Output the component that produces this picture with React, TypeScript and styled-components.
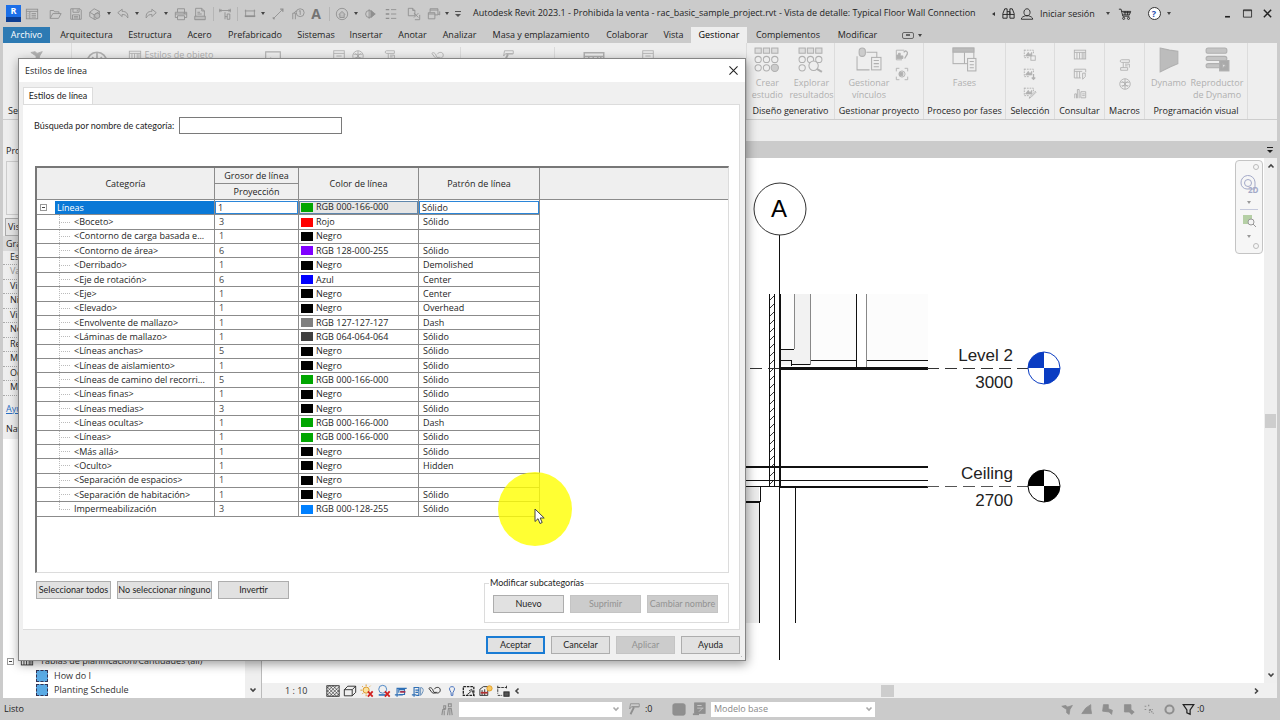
import React from "react";
import styled, { createGlobalStyle, css } from "styled-components";

const GlobalStyle = createGlobalStyle`
  *, *::before, *::after { box-sizing: border-box; }
  html, body { margin: 0; padding: 0; }
  body {
    font-family: "Open Sans", "Noto Sans", sans-serif;
    font-size: 9px;
    line-height: 12px;
    color: #1e1e1e;
    background: #cbcbcb;
  }
  button, input, select { font: inherit; color: inherit; margin: 0; }
`;

const controlFont = css`
  font-family: Lato, "Open Sans", sans-serif;
  font-size: 9px;
`;

/* ---------- icons ---------- */

const glyphs: Record<string, React.ReactNode> = {
  home: <><rect x="1.5" y="2.5" width="13" height="11" /><path d="M1.5 5h13M5.5 5v8.500M7.500 7.500h5M7.500 9.500h5M7.500 11.500h5M3 7.500h1M3 9.500h1M3 11.500h1" /></>,
  open: <path d="M2.500 13V4h4l1 1.500h5V8M2.500 13l3-5.500h9.500L12 13z" />,
  save: <><path d="M2 2h10.500L14 3.500V14H2zM4.500 2v4h7V2M4 14V9h8v5" /><path d="M5.500 11h5M5.500 12.500h5M9.500 3v2" /></>,
  sync: <><path d="M2 6l5-4 6 3v6l-5 3.500L2 11zM2 6l5 3 6-4M7 9v5" /><circle cx="10.500" cy="10" r="3" fill="#bbb" /></>,
  undo: <path d="M2 6.500L7 2.500V5c5 0 7 2.500 6.500 7.500C12 9.500 10 8.500 7 8.500V11z" />,
  redo: <path d="M14 6.500L9 2.500V5c-5 0-7 2.500-6.500 7.500C4 9.500 6 8.500 9 8.500V11z" />,
  print: <><path d="M4 6V2h8v4M4 12H1.500V6h13v6H12" /><path d="M4 10h8v4.500H4zM1.500 8h13" /><path d="M11 7h2" strokeWidth="1.500" /></>,
  pdf: <><path d="M3 1.500h7L13 4.500V14H3zM10 1.500v3h3" /><path d="M5 8h5M5 6h3M2 10.500h12v4H2z" fill="#bbb" /></>,
  measure: <path d="M2 2v4M14 2v4M2 4h12M4 3L2 4l2 1M12 3l2 1-2 1M8 6v8M10.500 8h3v6h-3zM8 11h2.500" />,
  dim: <><path d="M2 4.500h12M3 3v8M13 3v8" /><path d="M2 10.500h12" strokeWidth="2" /></>,
  line: <><path d="M3 13L12.500 3.500" /><path d="M10.500 2.500h3v3M2 12l2 2" strokeWidth="1.500" /></>,
  tag: <><path d="M2 14V7h3v7M3.500 7L6 4" /><circle cx="10.500" cy="6.500" r="4.500" /><path d="M10.500 4v5M9 5l1.500-1" /></>,
  cube: <><circle cx="8" cy="8" r="6.500" /><path d="M4.500 8.500L8 5l3.500 3.500M5.500 8v4h5V8" fill="#bbb" /></>,
  section: <><circle cx="7" cy="8" r="4" /><path d="M7 2.500V13.500" /><path d="M9 4l5 4-5 4z" fill="currentColor" /></>,
  lines: <><path d="M2 3h4M2 8h4M2 13h4" strokeWidth="1.500" /><path d="M8 3h6M8 8h6M8 13h6" /></>,
  closeWin: <><path d="M1.500 1.500h5L9 4v6H1.500zM6.500 1.500V4H9" /><path d="M9 14.500h5.500V9M8 7l5 5M13 7l-5 5" /></>,
  switchWin: <path d="M3.500 6V2h9v7H9M3.500 3.500h9M1.500 6.500H9v7H1.500zM1.500 8H9M14.500 5v4l-2-1" />,
  binoculars: <path d="M2 13V8l2-5h2.500v10zM9.500 13V3H12l2 5v5zM6.500 6h3v3h-3M2 9h4.500M9.500 9H14" />,
  user: <path d="M8 10c-2.500 0-3.500-2-3.500-4S6 2 8 2s3.500 2 3.500 4-1 4-3.500 4zM1.500 14h13c0-2.500-2.500-3-4.500-4H6c-2 1-4.500 1.500-4.500 4z" />,
  cart: <><path d="M1 2.500h2.500l2 8h7.500M4 5h10.500l-1.500 4H5.500M6 6.500h8M8 5v4M11 5v4" /><circle cx="6.500" cy="13" r="1.200" /><circle cx="12" cy="13" r="1.200" /></>,
  min: <path d="M5 12h6" strokeWidth="2" />,
  max: <path d="M3 3.500h10v9H3zM3 4.500h10" />,
  close: <path d="M3.500 3.500l9 9M12.500 3.500l-9 9" strokeWidth="1.800" />,
  thinClose: <path d="M3 3l10 10M13 3L3 13" strokeWidth="1.300" />,
  page: <><rect x="2" y="2" width="12" height="12" /><path d="M2 5h12M5 8h6M5 11h6" /></>,
  picture: <><path d="M1.500 2.500h13v11h-13z" /><path d="M2 12l4-4 3 3 2-2 3 3z" fill="currentColor" /></>,
  linkPicture: <><path d="M8 13.500H1.500v-11h9" /><path d="M2 12V8h2V6h2v3h3v3z" fill="currentColor" /><path d="M10 5c2-3 5-1 4 2l-3 5" strokeWidth="1.500" /></>,
  target: <><path d="M1.500 5V1.500H5M11 1.500h3.500V5M1.500 11v3.500H5M14.500 11v3.500H11" /><circle cx="8" cy="8" r="3.500" /><path d="M5 6h4v4H5z" fill="currentColor" /></>,
  pictureBox: <><path d="M1.500 2v9M1.500 2.500H12V6M1.500 11H7" strokeDasharray="2 1" /><path d="M3 9l3-4 2 3 2-3v4z" fill="currentColor" /><rect x="9" y="9" width="5" height="5" /></>,
  picturePoint: <><path d="M1.500 2v9M1.500 2.500H12V6M1.500 11H7" strokeDasharray="2 1" /><path d="M3 9l3-4 2 3 2-3v4z" fill="currentColor" /><path d="M12 8v6M10 12l2 2 2-2" strokeWidth="1.500" /></>,
  pictureEdit: <><path d="M1.500 2v9M1.500 2.500H12V6M1.500 11H7" strokeDasharray="2 1" /><path d="M3 9l3-4 2 3 2-3v4z" fill="currentColor" /><path d="M7 14l1-2 6-6 1 1-6 6z" /></>,
  grid: <><rect x="1.500" y="2.500" width="13" height="10" /><path d="M1.500 5h13M4.500 5v7.500M7.500 5v7.500M10.500 5v7.500M12.500 5v7.500" /></>,
  gridFind: <><path d="M9 12.500H1.500v-10h13V6M1.500 5h9M4.500 5v7.500M7.500 5v7.500" /><path d="M11 7h3v4l-3 3z" /></>,
  chart: <path d="M2 14V9h2v5M5 14V4h2v10M9 6.500h5.500v7H9zM10.500 9h3M10.500 11h3" />,
  script: <path d="M4 2h9v3H6v6M4 2C2 2 2 5 4 5h2M3 11h8v3H3zM8 7h5v4M8 9h3" />,
  globe: <><circle cx="8" cy="8" r="6" /><path d="M3 6h10M4 10h8M8 2v12M5 5l6 6M11 5l-6 6" /></>,
  hatch: <><rect x="1" y="2" width="14" height="12" /><path d="M1 5l3-3M1 9l7-7M1 13l11-11M4 14L15 3M8 14l7-7M12 14l3-3M4 2l11 11M1 3l11 11M1 7l7 7M8 2l7 7M1 11l3 3" strokeWidth=".7" /></>,
  box: <path d="M1.500 6.500h9v7h-9zM1.500 6.500l4-4h9l-4 4M14.500 2.500v7l-4 4" />,
  sunOff: <><circle cx="7" cy="7" r="3.500" stroke="#d9901a" fill="#fbe3a0" /><path d="M7 .5v2M.5 7h2M2.500 2.500l1 1M11 3l1-1M2.500 11.500l1-1M7 12v2" stroke="#d9901a" /><path d="M9 8.500l5.500 6M14.500 8.500l-5.500 6" stroke="#d02020" strokeWidth="2" /></>,
  shadowOff: <><circle cx="6.500" cy="6" r="4.500" stroke="#3c7cc0" /><path d="M2 12.500h8" stroke="#3c7cc0" strokeWidth="2" /><path d="M9 8.500l5.500 6M14.500 8.500l-5.500 6" stroke="#d02020" strokeWidth="2" /></>,
  crop: <><path d="M1 12.500h9M3.500 14.500V5h11M5.500 10V6.500H12V12H6" stroke="#2f6fb5" strokeWidth="1.300" /><path d="M7 9h6" stroke="#a03050" strokeWidth="2" /></>,
  cropShow: <><path d="M1 12.500h5M3.500 14.500V4H9v9H6M5 7h4M5 9.500h3" stroke="#2f6fb5" strokeWidth="1.300" /><path d="M11 4c3 0 3.500 3 2.500 5s-1.500 3-2.500 4z" stroke="#5b87b5" /></>,
  glasses: <><path d="M1 5c2-2 4 0 5 3s3 3 4 1" /><path d="M7 6c2-3 7-3 7 1s-5 4-6 2" /><path d="M1 5l3 4c1 2 4 2 4 0" /></>,
  bulb: <path d="M8 3c2.500 0 3.500 2 2.500 4L9 10v3H7v-3L5.500 7C4.500 5 5.500 3 8 3z" stroke="#3363b8" />,
  film: <><rect x="1.500" y="3" width="12" height="10" strokeDasharray="3 1" strokeWidth="1.500" /><path d="M8 8l3-2 3 8M6 12l5-4" /></>,
  reveal: <><path d="M1 6l4-3h5v10H1zM3.500 7v6M6.500 6v7" /><path d="M2 10h8" stroke="#b03030" strokeWidth="2" /><circle cx="12" cy="5" r="3" stroke="#e09a20" fill="#f8c860" /></>,
  lockDim: <><path d="M2 2v9M2 4h10M12 2v4M2 13h5" strokeDasharray="3 1" /><rect x="9" y="9" width="6" height="5" fill="#555" /></>,
  people: <path d="M4 4h2v3H4zM9 2h3v3H9zM2 14l1-6h3M4.500 9v5M8 14l1-7h3l1 7M10.500 8v6" strokeWidth="1.200" />,
  roller: <><path d="M4 2h10v3.500H5L3 8zM5.500 5.500h8" /><path d="M8 6l-4 8" strokeWidth="2" /></>,
  solid: <rect x="1" y="2" width="14" height="13" rx="2" fill="currentColor" />,
  solidDoc: <><rect x="3" y="1" width="12" height="12" fill="currentColor" /><path d="M1 14h7" strokeWidth="2" /><path d="M6 4h5M6 7h7M8 11l4-4" stroke="#ccc" /></>,
  selA: <path d="M1 4l5-1 2 2 6-2-3 5-1 6-3-2V8z" fill="currentColor" />,
  selB: <path d="M1 13l5-7 6-4v5l1 6z" fill="currentColor" />,
  selC: <path d="M3 2h6v5l5 2-1 5-3-3-8-1z" fill="currentColor" />,
  selD: <path d="M3 2h8v6l4 3-3 3-3-3H3z" fill="currentColor" />,
  selE: <path d="M2 4h3M7 2v3M2 8h3M8 8l5 5M8 8v4M8 8h4" strokeWidth="1.500" strokeDasharray="2 1" />,
  ring: <circle cx="8" cy="8" r="5" strokeWidth="2.500" />,
  funnel: <path d="M1.500 2h13L10 8.500V14l-4-2V8.500z" strokeWidth="1.500" />,
};

const Svg = styled.svg`
  display: block;
  flex: none;
  fill: none;
  stroke: currentColor;
`;

const Glyph = ({ name, size = 14 }: { name: string; size?: number }) => (
  <Svg width={size} height={size} viewBox="0 0 16 16" aria-hidden="true">{glyphs[name]}</Svg>
);

const studyCells = (
  <>
    {[1, 9, 17].map((x) => <rect key={x} x={x} y="1" width="6" height="5" fill="#ddd" />)}
    {[4, 12, 20].map((x) => <circle key={x} cx={x} cy="12" r="3" />)}
    <circle cx="4" cy="20" r="3" />
  </>
);

const bigGlyphs: Record<string, React.ReactNode> = {
  study: (
    <>
      {studyCells}
      <circle cx="12" cy="20" r="3" />
      <circle cx="20" cy="20" r="3.500" fill="#ccc" />
    </>
  ),
  results: (
    <>
      {studyCells}
      <circle cx="15" cy="18" r="4.500" fill="#eee" />
      <path d="M18 21l5 3" strokeWidth="2" />
    </>
  ),
  links: (
    <>
      <rect x="3" y="1" width="6" height="8" rx="3" fill="#ccc" />
      <path d="M10 5h10v5M1 9v13h12" />
      <rect x="15" y="10" width="9" height="12" fill="#eee" />
      <path d="M17 13h5M17 16h5M17 19h5" />
    </>
  ),
  phases: (
    <>
      <rect x="1" y="1" width="20" height="15" />
      <rect x="1" y="1" width="20" height="4" fill="#bbb" />
      <path d="M12 5v11" />
      <rect x="15" y="11" width="8" height="12" fill="#eee" />
      <path d="M17 14h4M17 17h4M17 20h4" />
    </>
  ),
  dynamo: <path d="M4 1l9 2 8 1v12l-7 3-10 5zM4 1v23" fill="#bcbcbc" />,
  player: (
    <>
      <rect x="2" y="1" width="20" height="5" rx="2" fill="#c4c4c4" />
      <rect x="2" y="9" width="20" height="4" rx="2" fill="#c4c4c4" />
      <rect x="2" y="16" width="14" height="4" rx="2" fill="#c4c4c4" />
      <rect x="15" y="13" width="9" height="10" fill="#aaa" />
      <path d="M18 16v4l3-2z" fill="#eee" />
    </>
  ),
};

const BigGlyph = ({ name }: { name: string }) => (
  <Svg width={26} height={26} viewBox="0 0 25 25" aria-hidden="true">{bigGlyphs[name]}</Svg>
);

const Caret = styled.span<{ $left?: boolean; $light?: boolean }>`
  width: 0;
  height: 0;
  border: 2px solid transparent;
  ${({ $left, $light }) =>
    $left
      ? css`border-right: 3px solid #333; border-left: 0;`
      : css`border-top: 3px solid ${$light ? "#999" : "#444"}; border-bottom: 0;`}
`;

/* ---------- window frame ---------- */

const Window = styled.div`
  position: relative;
  display: flex;
  flex-direction: column;
  min-height: 100vh;
  overflow: hidden;
`;

const TitleBar = styled.header`
  display: flex;
  align-items: center;
  height: 27px;
  padding: 0 3px 0 6px;
`;

const ToolCell = styled.button<{ $w: number; $dark?: boolean }>`
  display: flex;
  align-items: center;
  justify-content: center;
  flex: none;
  width: ${({ $w }) => $w}px;
  height: 20px;
  padding: 0;
  border: 0;
  background: none;
  color: ${({ $dark }) => ($dark ? "#222" : "#8f8f8f")};
`;

const Letter = styled.span`
  font: bold 14px/18px "Open Sans", sans-serif;
  color: #737373;
`;

const Logo = styled.span`
  display: flex;
  justify-content: center;
  flex: none;
  width: 15px;
  height: 17px;
  background: linear-gradient(#1c6fe8 70%, #0d3f94 70%);
  color: #fff;
  font-size: 9px;
  font-weight: 700;
`;

const Divider = styled.span<{ $w: number }>`
  flex: none;
  width: ${({ $w }) => $w}px;
  height: 14px;
  background: linear-gradient(#b5b5b5, #b5b5b5) center / 1px 100% no-repeat;
`;

const WindowTitle = styled.h1`
  flex: 1;
  margin: 0;
  padding: 0 0 2px 8px;
  font-size: 9px;
  font-weight: 400;
  white-space: nowrap;
  overflow: hidden;
`;

const SignIn = styled.a`
  width: 66px;
  padding-left: 3px;
  color: inherit;
  text-decoration: none;
  white-space: nowrap;
`;

const Spacer = styled.span<{ $w: number }>`
  flex: none;
  width: ${({ $w }) => $w}px;
`;

const HelpBadge = styled.span`
  width: 13px;
  height: 13px;
  border: 1px solid #333;
  border-radius: 50%;
  background: #fff;
  color: #1f4fb0;
  font: bold 9px/11px "Open Sans", sans-serif;
`;

const TabStrip = styled.nav`
  display: flex;
  height: 16px;
  padding-left: 3px;
`;

const RibbonTab = styled.button<{ $w: number; $kind?: "file" | "active" }>`
  flex: none;
  width: ${({ $w }) => $w}px;
  padding: 0;
  border: 0;
  background: none;
  line-height: 16px;
  text-align: center;
  white-space: nowrap;
  ${({ $kind }) => $kind === "file" && css`background: #2d7ab3; color: #fff; margin-right: 2px;`}
  ${({ $kind }) => $kind === "active" && css`background: #eee; color: #000;`}
`;

const RibbonToggle = styled.button`
  display: flex;
  align-items: center;
  gap: 4px;
  margin-left: 16px;
  padding: 0;
  border: 0;
  background: none;
`;

const Pill = styled.span`
  display: flex;
  align-items: center;
  justify-content: center;
  width: 12px;
  height: 7px;
  border: 1px solid #666;
  border-radius: 2px;
  &::after { content: ""; width: 4px; height: 2px; background: #666; }
`;

/* ---------- ribbon ---------- */

const Ribbon = styled.section`
  display: flex;
  height: 77px;
  margin: 0 3px;
  background: #eee;
  border-bottom: 1px solid #cdcdcd;
`;

const Panel = styled.section<{ $w: number }>`
  display: flex;
  flex-direction: column;
  flex: none;
  width: ${({ $w }) => $w}px;
  border-right: 1px solid #dcdcdc;
`;

const PanelBody = styled.div<{ $align?: string }>`
  display: flex;
  flex: 1;
  justify-content: ${({ $align }) => $align ?? "center"};
  gap: ${({ $align }) => ($align ? 0 : 2)}px;
  padding-top: 4px;
  color: #b0b0b0;
`;

const PanelTitle = styled.h2<{ $start?: boolean }>`
  margin: 0;
  height: 14px;
  padding-left: ${({ $start }) => ($start ? 5 : 0)}px;
  font-size: 9px;
  font-weight: 400;
  text-align: ${({ $start }) => ($start ? "left" : "center")};
  white-space: nowrap;
`;

const BigTool = styled.button`
  display: flex;
  flex-direction: column;
  align-items: center;
  align-self: flex-start;
  min-width: 40px;
  padding: 0;
  border: 0;
  background: none;
  color: inherit;
  white-space: pre-line;
  svg { margin-bottom: 4px; }
`;

const SmallTools = styled.div<{ $top?: number }>`
  display: flex;
  flex-direction: column;
  gap: 5px;
  padding-top: ${({ $top }) => $top ?? 1}px;
`;

const TopTool = styled.span<{ $w: number; $line?: boolean }>`
  display: flex;
  flex: none;
  justify-content: center;
  gap: 3px;
  width: ${({ $w }) => $w}px;
  height: 56px;
  padding-top: 2px;
  white-space: nowrap;
  border-right: 1px solid ${({ $line }) => ($line ? "#dadada" : "transparent")};
`;

const OptionsBar = styled.div`
  height: 21px;
  margin: 0 3px;
  background: #eee;
`;

/* ---------- workspace ---------- */

const Workspace = styled.main`
  display: flex;
  flex: 1;
  margin: 0 3px;
`;

const SidePane = styled.aside`
  display: flex;
  flex-direction: column;
  flex: none;
  width: 259px;
  background: #eee;
  border-right: 1px solid #bbb;
`;

const PaneTitle = styled.h2`
  margin: 0;
  padding: 4px 0 4px 3px;
  font-size: 9px;
  line-height: 12px;
  font-weight: 400;
`;

const TypeSelector = styled.div`
  height: 54px;
  margin: 0 3px 3px;
  border: 1px solid #ccc;
`;

const PaneSelect = styled.select`
  height: 18px;
  margin: 0 2px;
  padding-left: 2px;
  appearance: none;
  border: 1px solid #aaa;
  border-radius: 0;
  background: #e4e4e4;
`;

const PropertyGroup = styled.h3`
  margin: 0;
  padding: 2px 3px 1px;
  font-size: 9px;
  font-weight: 400;
  background: #d9d9d9;
`;

const PropertyList = styled.ul`
  margin: 0;
  padding: 0 0 6px;
  list-style: none;
`;

const PropertyItem = styled.li<{ $off?: boolean }>`
  padding: 0 0 0 7px;
  line-height: 12px;
  height: 14px;
  border-bottom: 1px dotted #aaa;
  white-space: nowrap;
  color: ${({ $off }) => ($off ? "#999" : "inherit")};
  &:nth-child(2n) { height: 15px; }
`;

const PaneLink = styled.a`
  display: block;
  padding: 1px 3px 4px;
  color: #2a6fc4;
`;

const Browser = styled.div`
  display: flex;
  flex: 1;
  background: #fff;
`;

const Tree = styled.ul`
  display: flex;
  flex: 1;
  flex-direction: column;
  justify-content: flex-end;
  margin: 0;
  padding: 0 0 1px 4px;
  list-style: none;
`;

const TreeItem = styled.li<{ $depth: number }>`
  display: flex;
  align-items: center;
  gap: 6px;
  height: 14px;
  padding-left: ${({ $depth }) => $depth * 29}px;
  color: #333;
  &:nth-child(2) { height: 15px; }
`;

const SheetIcon = styled.span`
  width: 12px;
  height: 12px;
  border: 1px dashed #335;
  background: #5aaae4;
`;

const Expander = styled.span`
  position: relative;
  flex: none;
  width: 7px;
  height: 7px;
  border: 1px solid #999;
  &::after { content: ""; position: absolute; left: 1px; right: 1px; top: 2px; height: 1px; background: #444; }
`;

const ScrollTrack = styled.div<{ $w: number }>`
  display: flex;
  flex-direction: column;
  align-items: center;
  justify-content: space-between;
  flex: none;
  width: ${({ $w }) => $w}px;
  padding: 4px 0;
  background: #efefef;
`;

const Chevron = ({ d, color = "#444" }: { d: string; color?: string }) => (
  <Svg width={8} height={8} viewBox="0 0 8 8" strokeWidth="1.600" color={color}><path d={d} /></Svg>
);
const UP = "M1.500 5.500L4 3l2.500 2.500";
const DOWN = "M1.500 2.500L4 5l2.500-2.500";
const RIGHT = "M3 1.500L5.500 4L3 6.500";
const LEFT = "M5.500 1.500L3 4l2.500 2.500";

const ViewPane = styled.section`
  display: flex;
  flex: 1;
  flex-direction: column;
  min-width: 0;
`;

const ViewTabs = styled.div`
  display: flex;
  align-items: center;
  justify-content: flex-end;
  height: 17px;
  padding-right: 4px;
`;

const ViewMenu = styled.span<{ $light?: boolean }>`
  width: 6px;
  padding-top: 2px;
  border-top: 1px solid ${({ $light }) => ($light ? "#555" : "#222")};
  &::after {
    content: "";
    display: block;
    border: 3px solid transparent;
    border-top-color: ${({ $light }) => ($light ? "#555" : "#222")};
    border-bottom: 0;
  }
`;

const ViewRow = styled.div`
  display: flex;
  flex: 1;
`;

const Canvas = styled.div`
  position: relative;
  flex: 1;
  min-width: 0;
  background: #fff;
`;

const Drawing = styled.svg`
  display: block;
  position: absolute;
  width: 100%;
  height: 100%;
  font-family: "Liberation Sans", Arial, sans-serif;
`;

const Thumb = styled.span<{ $w: number; $h: number }>`
  width: ${({ $w }) => $w}px;
  height: ${({ $h }) => $h}px;
  background: #cdcdcd;
`;

const NavBar = styled.div`
  position: absolute;
  top: 2px;
  right: 1px;
  display: flex;
  flex-direction: column;
  align-items: center;
  justify-content: space-between;
  width: 28px;
  height: 94px;
  padding: 3px 0 4px;
  border: 1px solid #c4c4c4;
  border-radius: 4px;
  background: #f6f6f6;
  color: #a3a9c8;
`;

const NavDot = styled.span`
  align-self: flex-end;
  width: 6px;
  height: 6px;
  margin-right: 3px;
  border: 1px solid #bbb;
  border-radius: 50%;
`;

const ViewControls = styled.div`
  display: flex;
  align-items: center;
  height: 15px;
  padding: 0 8px 0 23px;
  background: #f0f0f0;
  color: #333;
`;

const Scale = styled.span`
  width: 39px;
`;

const HScroll = styled.div`
  display: flex;
  flex: 1;
  align-items: center;
  justify-content: space-between;
`;

const StatusBar = styled.footer`
  display: flex;
  align-items: center;
  height: 22px;
  padding-left: 4px;
  background: #cbcbcb;
`;

const StatusText = styled.span<{ $w: number }>`
  flex: none;
  width: ${({ $w }) => $w}px;
`;

const StatusSelect = styled.div<{ $w: number }>`
  position: relative;
  display: flex;
  align-items: center;
  justify-content: flex-end;
  flex: none;
  width: ${({ $w }) => $w}px;
  height: 15px;
  padding-right: 2px;
  background: #fff;
  select {
    position: absolute;
    inset: 0;
    width: 100%;
    padding: 0 3px;
    appearance: none;
    border: 0;
    background: none;
    color: #888;
  }
`;

/* ---------- dialog ---------- */

const Dialog = styled.section`
  position: absolute;
  left: 18px;
  top: 58px;
  display: flex;
  flex-direction: column;
  width: min(728px, calc(100vw - 36px));
  border: 1px solid #858585;
  background: #f0f0f0;
  box-shadow: 1px 3px 10px rgba(0, 0, 0, 0.4);
`;

const DialogHeader = styled.header`
  display: flex;
  align-items: center;
  justify-content: space-between;
  height: 23px;
  padding: 0 4px 0 6px;
  background: #fff;
`;

const DialogTitle = styled.h2`
  margin: 0;
  font-size: 9px;
  font-weight: 400;
`;

const DialogTabs = styled.div`
  display: flex;
  padding: 5px 0 0 4px;
`;

const DialogTab = styled.button`
  ${controlFont}
  width: 70px;
  height: 17px;
  padding: 0;
  border: 1px solid #dcdcdc;
  border-bottom: 0;
  background: #fff;
  white-space: nowrap;
`;

const Page = styled.div`
  margin: 0 5px 0 4px;
  padding: 12px 10px 6px 11px;
  border: 1px solid #dcdcdc;
  border-left: 0;
  background: #fff;
`;

const Search = styled.label`
  ${controlFont}
  display: flex;
  align-items: center;
  gap: 5px;
  white-space: nowrap;
`;

const SearchInput = styled.input`
  width: 163px;
  height: 17px;
  border: 1px solid #7a7a7a;
`;

const GridFrame = styled.div`
  height: 407px;
  margin: 32px 0 8px 1px;
  border: 1px solid #dcdcdc;
  border-top: 2px solid #777;
  border-left: 2px solid #777;
`;

const Grid = styled.table`
  width: 100%;
  height: 349px;
  table-layout: fixed;
  border-collapse: separate;
  border-spacing: 0;
`;

const line = "1px solid #8b8b8b";

const HeadCell = styled.th`
  height: 16px;
  padding: 0;
  border-right: ${line};
  border-bottom: ${line};
  background: #efefef;
  font-weight: 400;
  &:last-child[rowspan] { border-right: 0; }
`;

const Cell = styled.td<{ $pad?: number }>`
  padding: 0 0 0 ${({ $pad }) => $pad ?? 4}px;
  border-right: ${line};
  border-bottom: ${line};
  line-height: 12px;
  white-space: nowrap;
  overflow: hidden;
`;

const NumberCell = styled(Cell)`
  color: #444;
`;

const TreeCell = styled(Cell)<{ $last?: boolean }>`
  padding-left: 37px;
  background-image:
    repeating-linear-gradient(#bbb 0 1px, transparent 1px 2px),
    repeating-linear-gradient(90deg, #bbb 0 1px, transparent 1px 2px);
  background-size: 1px ${({ $last }) => ($last ? "50%" : "100%")}, 12px 1px;
  background-position: 22px 0, 22px 50%;
  background-repeat: no-repeat;
`;

const RootRow = styled.div`
  display: flex;
  align-items: center;
  padding-left: 3px;
`;

const RootLabel = styled.span`
  flex: 1;
  margin-left: 8px;
  padding-left: 2px;
  line-height: 13px;
  background: #0a78d6;
  color: #fff;
`;

const FillerCell = styled.td`
  padding: 0;
`;

const editing = css`
  display: flex;
  align-items: center;
  width: 100%;
  height: 13px;
  padding: 0 2px;
  border: 1px solid #2b86d9;
  border-radius: 0;
  background: #fff;
  appearance: none;
  outline: 0;
`;
const EditInput = styled.input`${editing}`;
const EditSelect = styled.select`${editing}`;
const EditButton = styled.button`
  ${editing}
  padding: 0 1px;
  border: 1px solid #5f87ad;
  background: #e6e6e6;
`;

const ColorValue = styled.span`
  display: flex;
  align-items: center;
  gap: 3px;
`;

const Swatch = styled.span<{ $c: string }>`
  width: 12px;
  height: 9px;
  background: ${({ $c }) => $c};
`;

const PageFooter = styled.div`
  display: flex;
  align-items: flex-start;
  justify-content: space-between;
  padding-left: 2px;
`;

const Buttons = styled.div`
  display: flex;
  gap: 6px;
`;

const PushButton = styled.button<{ $w: number; $primary?: boolean }>`
  ${controlFont}
  width: ${({ $w }) => $w}px;
  height: 18px;
  padding: 0;
  border: 1px solid #adadad;
  background: #e1e1e1;
  line-height: 14px;
  white-space: nowrap;
  ${({ $primary }) => $primary && css`border: 2px solid #1a7cd4;`}
  &:disabled { border-color: #c4c4c4; background: #cccccc; color: #929292; }
`;

const GroupBox = styled.fieldset`
  ${controlFont}
  display: flex;
  gap: 6px;
  width: 245px;
  margin: -4px 0 0;
  padding: 6px 0 9px 8px;
  border: 1px solid #dcdcdc;
  legend { margin-left: -4px; padding: 0 1px; }
`;

const DialogFooter = styled.footer`
  display: flex;
  justify-content: flex-end;
  gap: 6px;
  padding: 6px 5px;
`;

const ResizeGrip = styled.span`
  position: absolute;
  right: 1px;
  bottom: 1px;
  width: 7px;
  height: 7px;
  background: radial-gradient(#bbb 40%, transparent 45%) 0 0 / 3px 3px;
  clip-path: polygon(100% 0, 100% 100%, 0 100%);
`;

const ClickHalo = styled.span`
  position: absolute;
  left: 479px;
  top: 413px;
  width: 74px;
  height: 74px;
  border-radius: 50%;
  background: rgba(255, 255, 0, 0.8);
  pointer-events: none;
  svg { position: absolute; left: 36px; top: 36px; }
`;

/* ---------- data ---------- */

type Row = [name: string, weight: number, swatch: string, color: string, pattern: string];
const rows: Row[] = [
  ["<Boceto>", 3, "#ff0000", "Rojo", "Sólido"],
  ["<Contorno de carga basada e...", 1, "#000000", "Negro", ""],
  ["<Contorno de área>", 6, "#8000ff", "RGB 128-000-255", "Sólido"],
  ["<Derribado>", 1, "#000000", "Negro", "Demolished"],
  ["<Eje de rotación>", 6, "#0000ff", "Azul", "Center"],
  ["<Eje>", 1, "#000000", "Negro", "Center"],
  ["<Elevado>", 1, "#000000", "Negro", "Overhead"],
  ["<Envolvente de mallazo>", 1, "#7f7f7f", "RGB 127-127-127", "Dash"],
  ["<Láminas de mallazo>", 1, "#404040", "RGB 064-064-064", "Sólido"],
  ["<Líneas anchas>", 5, "#000000", "Negro", "Sólido"],
  ["<Líneas de aislamiento>", 1, "#000000", "Negro", "Sólido"],
  ["<Líneas de camino del recorri...", 5, "#00a600", "RGB 000-166-000", "Sólido"],
  ["<Líneas finas>", 1, "#000000", "Negro", "Sólido"],
  ["<Líneas medias>", 3, "#000000", "Negro", "Sólido"],
  ["<Líneas ocultas>", 1, "#00a600", "RGB 000-166-000", "Dash"],
  ["<Líneas>", 1, "#00a600", "RGB 000-166-000", "Sólido"],
  ["<Más allá>", 1, "#000000", "Negro", "Sólido"],
  ["<Oculto>", 1, "#000000", "Negro", "Hidden"],
  ["<Separación de espacios>", 1, "#000000", "Negro", ""],
  ["<Separación de habitación>", 1, "#000000", "Negro", "Sólido"],
  ["Impermeabilización", 3, "#0080ff", "RGB 000-128-255", "Sólido"],
];

const tabs: [string, number, ("file" | "active")?][] = [
  ["Archivo", 47, "file"], ["Arquitectura", 69], ["Estructura", 58], ["Acero", 41], ["Prefabricado", 70],
  ["Sistemas", 52], ["Insertar", 48], ["Anotar", 45], ["Analizar", 49], ["Masa y emplazamiento", 114],
  ["Colaborar", 58], ["Vista", 35], ["Gestionar", 56, "active"], ["Complementos", 82], ["Modificar", 57],
];

const quickTools: [string, number][] = [
  ["home", 22], ["open", 24], ["save", 18], ["sync", 20], ["caret", 8], ["undo", 20], ["caret", 8], ["redo", 20],
  ["caret", 10], ["print", 20], ["pdf", 18], ["|", 8], ["measure", 16], ["|", 8], ["dim", 18], ["caret", 8],
  ["line", 22], ["tag", 18], ["A", 18], ["|", 8], ["cube", 18], ["caret", 10], ["section", 18], ["lines", 24],
  ["closeWin", 22], ["switchWin", 18], ["caret", 8], ["menu", 14],
];

const properties = [
  "Escala", "Valor", "Visualizar", "Nivel", "Vistas", "Nombre", "Recortar", "Modificar", "Ocultar", "Mostrar",
];

const viewTools = ["hatch", "box", "sunOff", "shadowOff", "crop", "cropShow", "glasses", "bulb", "film", "reveal", "lockDim"];
const filterTools: [string, number][] = [
  ["selA", 20], ["selB", 20], ["selC", 21], ["selD", 21], ["selE", 21], ["ring", 19],
];

/* ---------- parts ---------- */

const QuickTool = ({ name, w }: { name: string; w: number }) => {
  if (name === "|") return <Divider $w={w} />;
  if (name === "caret") return <ToolCell $w={w} aria-label="Más"><Caret /></ToolCell>;
  if (name === "menu") return <ToolCell $w={w} aria-label="Personalizar"><ViewMenu $light /></ToolCell>;
  if (name === "A") return <ToolCell $w={w}><Letter>A</Letter></ToolCell>;
  return <ToolCell $w={w} aria-label={name}><Glyph name={name} /></ToolCell>;
};

const LevelHead = ({ x, y, color }: { x: number; y: number; color: string }) => (
  <g transform={`translate(${x} ${y})`}>
    <circle r="16" fill="#fff" stroke={color} />
    <path d="M0 0V-16A16 16 0 0 0 -16 0ZM0 0V16A16 16 0 0 0 16 0Z" fill={color} />
  </g>
);

const DetailDrawing = () => (
  <Drawing aria-label="Typical Floor Wall Connection">
    <defs>
      <pattern id="brick" width="6" height="8" patternUnits="userSpaceOnUse" x="507">
        <path d="M0 7L6 1" stroke="#333" strokeWidth="1" />
      </pattern>
    </defs>
    <g stroke="none">
      <rect x="519" y="136" width="147" height="72" fill="#fcfcfc" />
      <rect x="532" y="136" width="16" height="71" fill="#f2f2f2" />
      <rect x="519" y="191" width="29" height="16" fill="#f2f2f2" />
      <rect x="594" y="136" width="10" height="72" fill="#fff" />
      <rect x="480" y="328" width="17" height="137" fill="#ececec" />
      <rect x="507" y="136" width="6" height="192" fill="url(#brick)" />
    </g>
    <g stroke="#111" fill="none" shapeRendering="crispEdges">
      <path d="M507.500 136V328M512.500 136V328" />
      <path d="M517.500 77V502" />
      <path d="M518 136V329" strokeWidth="2" />
      <path d="M519 191.500H532M519 202.500H529V208M529 206.500H548M548 202.500H594M604 202.500H666M594.500 136V209" />
      <path d="M532.500 136V191M548.500 136V207M604.500 136V209" stroke="#888" />
      <path d="M518 210H666" strokeWidth="3" />
      <path d="M480 309H666M518 329H666M480 344H498" strokeWidth="2" />
      <path d="M480 322.500H666M480 328.500H518M498.500 328V344M497.500 344V465M533.500 329V465" />
      <path d="M488 210.500H517M665 210.500H767" strokeDasharray="12 6" stroke="#333" />
      <path d="M665 328.500H767" strokeDasharray="12 6" stroke="#555" />
    </g>
    <circle cx="518" cy="51" r="26" fill="none" stroke="#333" />
    <text x="517" y="59" fontSize="24" textAnchor="middle">A</text>
    <g fontSize="17" textAnchor="end" fill="#222">
      <text x="751" y="203">Level 2</text>
      <text x="751" y="230">3000</text>
      <text x="751" y="321">Ceiling</text>
      <text x="751" y="348">2700</text>
    </g>
    <LevelHead x={782} y={210} color="#0a3cc2" />
    <LevelHead x={782} y={328} color="#000" />
  </Drawing>
);

const LineStylesDialog = () => (
  <Dialog role="dialog" aria-labelledby="dialog-title">
    <DialogHeader>
      <DialogTitle id="dialog-title">Estilos de línea</DialogTitle>
      <ToolCell $w={16} $dark aria-label="Cerrar"><Glyph name="thinClose" size={13} /></ToolCell>
    </DialogHeader>
    <DialogTabs><DialogTab>Estilos de línea</DialogTab></DialogTabs>
    <Page>
      <Search>
        Búsqueda por nombre de categoría:
        <SearchInput type="text" />
      </Search>
      <GridFrame>
        <Grid>
          <colgroup>
            <col style={{ width: 178 }} />
            <col style={{ width: 84 }} />
            <col style={{ width: 120 }} />
            <col style={{ width: 121 }} />
            <col />
          </colgroup>
          <thead>
            <tr>
              <HeadCell rowSpan={2}>Categoría</HeadCell>
              <HeadCell>Grosor de línea</HeadCell>
              <HeadCell rowSpan={2}>Color de línea</HeadCell>
              <HeadCell rowSpan={2}>Patrón de línea</HeadCell>
              <HeadCell rowSpan={2} aria-hidden="true" />
            </tr>
            <tr><HeadCell>Proyección</HeadCell></tr>
          </thead>
          <tbody>
            <tr>
              <Cell $pad={0}>
                <RootRow><Expander /><RootLabel>Líneas</RootLabel></RootRow>
              </Cell>
              <Cell $pad={0}><EditInput aria-label="Grosor" defaultValue="1" /></Cell>
              <Cell $pad={0}>
                <EditButton><ColorValue><Swatch $c="#00a600" />RGB 000-166-000</ColorValue></EditButton>
              </Cell>
              <Cell $pad={0}><EditSelect aria-label="Patrón"><option>Sólido</option></EditSelect></Cell>
              <FillerCell />
            </tr>
            {rows.map(([name, weight, swatch, color, pattern], i) => (
              <tr key={name}>
                <TreeCell $last={i === rows.length - 1}>{name}</TreeCell>
                <NumberCell>{weight}</NumberCell>
                <Cell $pad={2}><ColorValue><Swatch $c={swatch} />{color}</ColorValue></Cell>
                <Cell>{pattern}</Cell>
                <FillerCell />
              </tr>
            ))}
          </tbody>
        </Grid>
      </GridFrame>
      <PageFooter>
        <Buttons>
          <PushButton $w={75}>Seleccionar todos</PushButton>
          <PushButton $w={95}>No seleccionar ninguno</PushButton>
          <PushButton $w={71}>Invertir</PushButton>
        </Buttons>
        <GroupBox>
          <legend>Modificar subcategorías</legend>
          <PushButton $w={71}>Nuevo</PushButton>
          <PushButton $w={71} disabled>Suprimir</PushButton>
          <PushButton $w={71} disabled>Cambiar nombre</PushButton>
        </GroupBox>
      </PageFooter>
    </Page>
    <DialogFooter>
      <PushButton $w={59} $primary>Aceptar</PushButton>
      <PushButton $w={59}>Cancelar</PushButton>
      <PushButton $w={59} disabled>Aplicar</PushButton>
      <PushButton $w={59}>Ayuda</PushButton>
    </DialogFooter>
    <ResizeGrip />
    <ClickHalo>
      <svg width="12" height="17" viewBox="0 0 12 17">
        <path d="M1 1v12.500l3-2.800 2 4.800 2.200-1-2-4.500h4z" fill="#fff" stroke="#444" />
      </svg>
    </ClickHalo>
  </Dialog>
);

export default function App() {
  return (
    <>
      <GlobalStyle />
      <Window>
        <TitleBar>
          <Logo>R</Logo>
          {quickTools.map(([name, w], i) => <QuickTool key={i} name={name} w={w} />)}
          <WindowTitle>
            Autodesk Revit 2023.1 - Prohibida la venta - rac_basic_sample_project.rvt - Vista de detalle: Typical Floor Wall Connection
          </WindowTitle>
          <ToolCell $w={12} $dark aria-label="Contraer"><Caret $left /></ToolCell>
          <ToolCell $w={18} $dark aria-label="Buscar"><Glyph name="binoculars" size={15} /></ToolCell>
          <ToolCell $w={20} $dark aria-label="Usuario"><Glyph name="user" size={14} /></ToolCell>
          <SignIn href="#">Iniciar sesión</SignIn>
          <ToolCell $w={10} aria-label="Más"><Caret /></ToolCell>
          <ToolCell $w={24} $dark aria-label="Tienda"><Glyph name="cart" /></ToolCell>
          <Spacer $w={6} />
          <ToolCell $w={22} $dark aria-label="Ayuda"><HelpBadge>?</HelpBadge></ToolCell>
          <ToolCell $w={8} aria-label="Más"><Caret /></ToolCell>
          <Spacer $w={44} />
          <ToolCell $w={20} $dark aria-label="Minimizar"><Glyph name="min" size={13} /></ToolCell>
          <ToolCell $w={20} $dark aria-label="Maximizar"><Glyph name="max" size={13} /></ToolCell>
          <ToolCell $w={20} $dark aria-label="Cerrar"><Glyph name="close" size={13} /></ToolCell>
        </TitleBar>
        <TabStrip>
          {tabs.map(([label, w, kind]) => <RibbonTab key={label} $w={w} $kind={kind}>{label}</RibbonTab>)}
          <RibbonToggle aria-label="Cinta"><Pill /><Caret /></RibbonToggle>
        </TabStrip>

        <Ribbon>
          <Panel $w={69}>
            <PanelBody><TopTool $w={66}><Glyph name="selA" /></TopTool></PanelBody>
            <PanelTitle $start>Seleccionar</PanelTitle>
          </Panel>
          <Panel $w={675}>
            <PanelBody $align="flex-start">
              <TopTool $w={50}><Glyph name="globe" size={26} /></TopTool>
              <TopTool $w={98}><Glyph name="grid" /> Estilos de objeto</TopTool>
              <TopTool $w={107}><Glyph name="picture" size={18} /></TopTool>
              <TopTool $w={24}><Glyph name="page" /></TopTool>
              <TopTool $w={14}><Glyph name="globe" /></TopTool>
              <TopTool $w={50}><Glyph name="script" /></TopTool>
              <TopTool $w={46} $line><Glyph name="glasses" /></TopTool>
              <TopTool $w={94} $line><Glyph name="roller" /></TopTool>
              <TopTool $w={78}><Glyph name="grid" size={24} /></TopTool>
              <TopTool $w={30}><Glyph name="page" /></TopTool>
            </PanelBody>
            <PanelTitle>Configuración</PanelTitle>
          </Panel>
          <Panel $w={88}>
            <PanelBody>
              <BigTool><BigGlyph name="study" />{"Crear\nestudio"}</BigTool>
              <BigTool><BigGlyph name="results" />{"Explorar\nresultados"}</BigTool>
            </PanelBody>
            <PanelTitle>Diseño generativo</PanelTitle>
          </Panel>
          <Panel $w={89}>
            <PanelBody>
              <BigTool><BigGlyph name="links" />{"Gestionar\nvínculos"}</BigTool>
              <Spacer $w={2} />
              <SmallTools><Glyph name="linkPicture" /><Glyph name="target" /></SmallTools>
            </PanelBody>
            <PanelTitle>Gestionar proyecto</PanelTitle>
          </Panel>
          <Panel $w={82}>
            <PanelBody><BigTool><BigGlyph name="phases" />Fases</BigTool></PanelBody>
            <PanelTitle>Proceso por fases</PanelTitle>
          </Panel>
          <Panel $w={49}>
            <PanelBody><SmallTools><Glyph name="pictureBox" /><Glyph name="picturePoint" /><Glyph name="pictureEdit" /></SmallTools></PanelBody>
            <PanelTitle>Selección</PanelTitle>
          </Panel>
          <Panel $w={50}>
            <PanelBody><SmallTools><Glyph name="grid" /><Glyph name="gridFind" /><Glyph name="chart" /></SmallTools></PanelBody>
            <PanelTitle>Consultar</PanelTitle>
          </Panel>
          <Panel $w={40}>
            <PanelBody><SmallTools $top={11}><Glyph name="script" /><Glyph name="globe" /></SmallTools></PanelBody>
            <PanelTitle>Macros</PanelTitle>
          </Panel>
          <Panel $w={103}>
            <PanelBody>
              <BigTool><BigGlyph name="dynamo" />Dynamo</BigTool>
              <BigTool><BigGlyph name="player" />{"Reproductor\nde Dynamo"}</BigTool>
            </PanelBody>
            <PanelTitle>Programación visual</PanelTitle>
          </Panel>
        </Ribbon>
        <OptionsBar />

        <Workspace>
          <SidePane>
            <PaneTitle>Propiedades</PaneTitle>
            <TypeSelector />
            <PaneSelect aria-label="Tipo de vista"><option>Vista</option></PaneSelect>
            <PropertyGroup>Gráficos</PropertyGroup>
            <PropertyList>
              {properties.map((p, i) => <PropertyItem key={p} $off={i === 1}>{p}</PropertyItem>)}
            </PropertyList>
            <PaneLink href="#">Ayuda</PaneLink>
            <PaneTitle>Navegador</PaneTitle>
            <Browser>
              <Tree>
                <TreeItem $depth={0}><Expander /><Glyph name="grid" />Tablas de planificación/Cantidades (all)</TreeItem>
                <TreeItem $depth={1}><SheetIcon />How do I</TreeItem>
                <TreeItem $depth={1}><SheetIcon />Planting Schedule</TreeItem>
              </Tree>
              <ScrollTrack $w={16}><Chevron d={UP} /><Chevron d={DOWN} /></ScrollTrack>
            </Browser>
          </SidePane>

          <ViewPane>
            <ViewTabs><ViewMenu /></ViewTabs>
            <ViewRow>
              <Canvas>
                <DetailDrawing />
                <NavBar>
                  <NavDot />
                  <Svg width={20} height={20} viewBox="0 0 20 20">
                    <path d="M2 8a7 7 0 0 1 14-1v7H8a6 6 0 0 1-6-6z" />
                    <circle cx="9" cy="8" r="3.500" />
                    <text x="9" y="18" fontSize="8" fontWeight="700" fill="#a3a9c8" stroke="none">2D</text>
                  </Svg>
                  <Caret $light />
                  <Svg width={18} height={20} viewBox="0 0 18 20">
                    <path d="M0 .5h18" stroke="#c5c9dc" />
                    <rect x="3" y="6" width="9" height="9" fill="#b5cfa5" stroke="none" />
                    <circle cx="11" cy="13" r="3" fill="#f4f4f4" stroke="#999" />
                    <path d="M13 15l3 3" stroke="#999" />
                  </Svg>
                  <Caret $light />
                  <NavDot />
                </NavBar>
              </Canvas>
              <ScrollTrack $w={13}>
                <Chevron d={UP} /><Thumb $w={11} $h={14} /><Chevron d={DOWN} />
              </ScrollTrack>
            </ViewRow>
            <ViewControls>
              <Scale>1 : 10</Scale>
              {viewTools.map((name) => <ToolCell key={name} $w={17} $dark aria-label={name}><Glyph name={name} size={14} /></ToolCell>)}
              <ToolCell $w={12} $dark aria-label="Atrás"><Chevron d={LEFT} /></ToolCell>
              <HScroll>
                <span />
                <Thumb $w={13} $h={12} />
                <Chevron d={RIGHT} />
              </HScroll>
              <Spacer $w={9} />
            </ViewControls>
          </ViewPane>
        </Workspace>

        <StatusBar>
          <StatusText $w={436}>Listo</StatusText>
          <ToolCell $w={15} aria-label="Equipos"><Glyph name="people" size={15} /></ToolCell>
          <Spacer $w={4} />
          <StatusSelect $w={163}><select aria-label="Subproyecto"><option /></select><Chevron d={DOWN} color="#aaa" /></StatusSelect>
          <ToolCell $w={23} aria-label="Solicitudes"><Glyph name="roller" /></ToolCell>
          <StatusText $w={24}>:0</StatusText>
          <ToolCell $w={20} aria-label="Opciones"><Glyph name="solid" /></ToolCell>
          <ToolCell $w={20} aria-label="Editar"><Glyph name="solidDoc" /></ToolCell>
          <Spacer $w={2} />
          <StatusSelect $w={164}><select aria-label="Opción de diseño"><option>Modelo base</option></select><Chevron d={DOWN} color="#aaa" /></StatusSelect>
          <HScroll />
          {filterTools.map(([name, w]) => <ToolCell key={name} $w={w} aria-label={name}><Glyph name={name} size={13} /></ToolCell>)}
          <ToolCell $w={18} $dark aria-label="Filtro"><Glyph name="funnel" size={13} /></ToolCell>
          <StatusText $w={83}>:0</StatusText>
        </StatusBar>

        <LineStylesDialog />
      </Window>
    </>
  );
}
